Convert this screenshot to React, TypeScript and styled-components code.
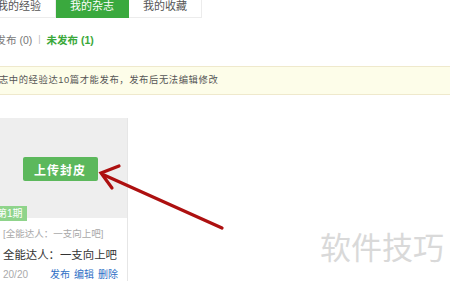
import styled, { createGlobalStyle } from "styled-components";

const GlobalStyle = createGlobalStyle`
  html, body {
    margin: 0;
    padding: 0;
    background: #ffffff;
  }
  body {
    font-family: "Liberation Sans", "Noto Sans CJK SC", sans-serif;
  }
`;

const Viewport = styled.div`
  position: relative;
  width: 450px;
  height: 281px;
  overflow: hidden;
  background: #ffffff;
`;

const Inner = styled.div`
  margin-left: -24px;
  margin-top: -7px;
  width: 474px;
`;

const Tabs = styled.div`
  display: flex;
  padding-left: 7px;
`;

const Tab = styled.div<{ $active?: boolean }>`
  height: 23px;
  line-height: 24px;
  padding: 0 12px;
  width: 48px;
  font-size: 11px;
  text-align: center;
  color: ${(p) => (p.$active ? "#ffffff" : "#555555")};
  background: ${(p) => (p.$active ? "#3aa93e" : "#ffffff")};
  border: 1px solid ${(p) => (p.$active ? "#3aa93e" : "#ececec")};
  border-left: none;
  box-sizing: content-box;
`;

const Stats = styled.div`
  display: flex;
  align-items: center;
  margin-top: 13px;
  padding-left: 9px;
  height: 16px;
  font-size: 10.5px;
  color: #777777;
`;

const Sep = styled.span`
  color: #bbbbbb;
  margin: 0 6px;
  font-size: 9px;
`;

const Current = styled.span`
  color: #3aa83a;
  font-weight: bold;
`;

const Notice = styled.div`
  margin-top: 19px;
  width: 471px;
  height: 27px;
  line-height: 27px;
  padding-left: 13px;
  box-sizing: content-box;
  background: #fdfde9;
  border-top: 1px solid #efe9cc;
  border-bottom: 1px solid #efe9cc;
  font-size: 9.3px;
  letter-spacing: 0.6px;
  color: #555555;
`;

const Card = styled.div`
  margin-top: 23px;
  margin-left: 16px;
  width: 134px;
  border-right: 1px solid #e6e6e6;
  border-left: 1px solid #e6e6e6;
`;

const Cover = styled.div`
  position: relative;
  height: 100px;
  background: #eeeeee;
  display: flex;
  justify-content: center;
  padding-top: 39px;
  box-sizing: border-box;
`;

const UploadButton = styled.button`
  width: 75px;
  height: 24px;
  border: none;
  border-radius: 2px;
  background: #5cb85c;
  color: #ffffff;
  font-family: "Noto Sans CJK SC", sans-serif;
  font-weight: bold;
  font-size: 12px;
  letter-spacing: 1px;
  padding: 0;
`;

const Issue = styled.span`
  position: absolute;
  left: 0;
  bottom: -3px;
  height: 15px;
  line-height: 15px;
  padding: 0 4px;
  background: #8fd48b;
  color: #ffffff;
  font-size: 10px;
`;

const Body = styled.div`
  padding: 9px 0 0 10px;
`;

const SubTitle = styled.div`
  font-size: 9.5px;
  line-height: 14px;
  color: #a8a8a8;
  white-space: nowrap;
`;

const Title = styled.div`
  font-size: 11.4px;
  line-height: 18px;
  margin-top: 5px;
  color: #333333;
  white-space: nowrap;
`;

const Meta = styled.div`
  display: flex;
  align-items: center;
  margin-top: 4px;
  font-size: 10px;
  line-height: 14px;
`;

const Count = styled.span`
  color: #aaaaaa;
  width: 47px;
`;

const Link = styled.span`
  color: #2f6fc6;
  margin-right: 4px;
`;

const Watermark = styled.div`
  position: absolute;
  left: 320px;
  top: 226px;
  font-family: "Noto Sans CJK SC", sans-serif;
  font-size: 31px;
  line-height: 40px;
  color: #d9d9d9;
`;

const Arrow = styled.svg`
  position: absolute;
  left: 0;
  top: 0;
`;

export default function App() {
  return (
    <>
      <GlobalStyle />
      <Viewport>
        <Inner>
          <Tabs>
            <Tab>我的经验</Tab>
            <Tab $active>我的杂志</Tab>
            <Tab>我的收藏</Tab>
          </Tabs>
          <Stats>
            <span>已发布 (0)</span>
            <Sep>|</Sep>
            <Current>未发布 (1)</Current>
          </Stats>
          <Notice>杂志中的经验达10篇才能发布，发布后无法编辑修改</Notice>
          <Card>
            <Cover>
              <UploadButton>上传封皮</UploadButton>
              <Issue>第1期</Issue>
            </Cover>
            <Body>
              <SubTitle>[全能达人：一支向上吧]</SubTitle>
              <Title>全能达人：一支向上吧</Title>
              <Meta>
                <Count>20/20</Count>
                <Link>发布</Link>
                <Link>编辑</Link>
                <Link>删除</Link>
              </Meta>
            </Body>
          </Card>
        </Inner>
        <Arrow width="450" height="281" viewBox="0 0 450 281">
          <line x1="222" y1="228" x2="104" y2="175" stroke="#ad1010" strokeWidth="3.2" strokeLinecap="round" />
          <polyline points="119,166 101,173 112,188" fill="none" stroke="#ad1010" strokeWidth="3.2" strokeLinecap="round" />
        </Arrow>
        <Watermark>软件技巧</Watermark>
      </Viewport>
    </>
  );
}
